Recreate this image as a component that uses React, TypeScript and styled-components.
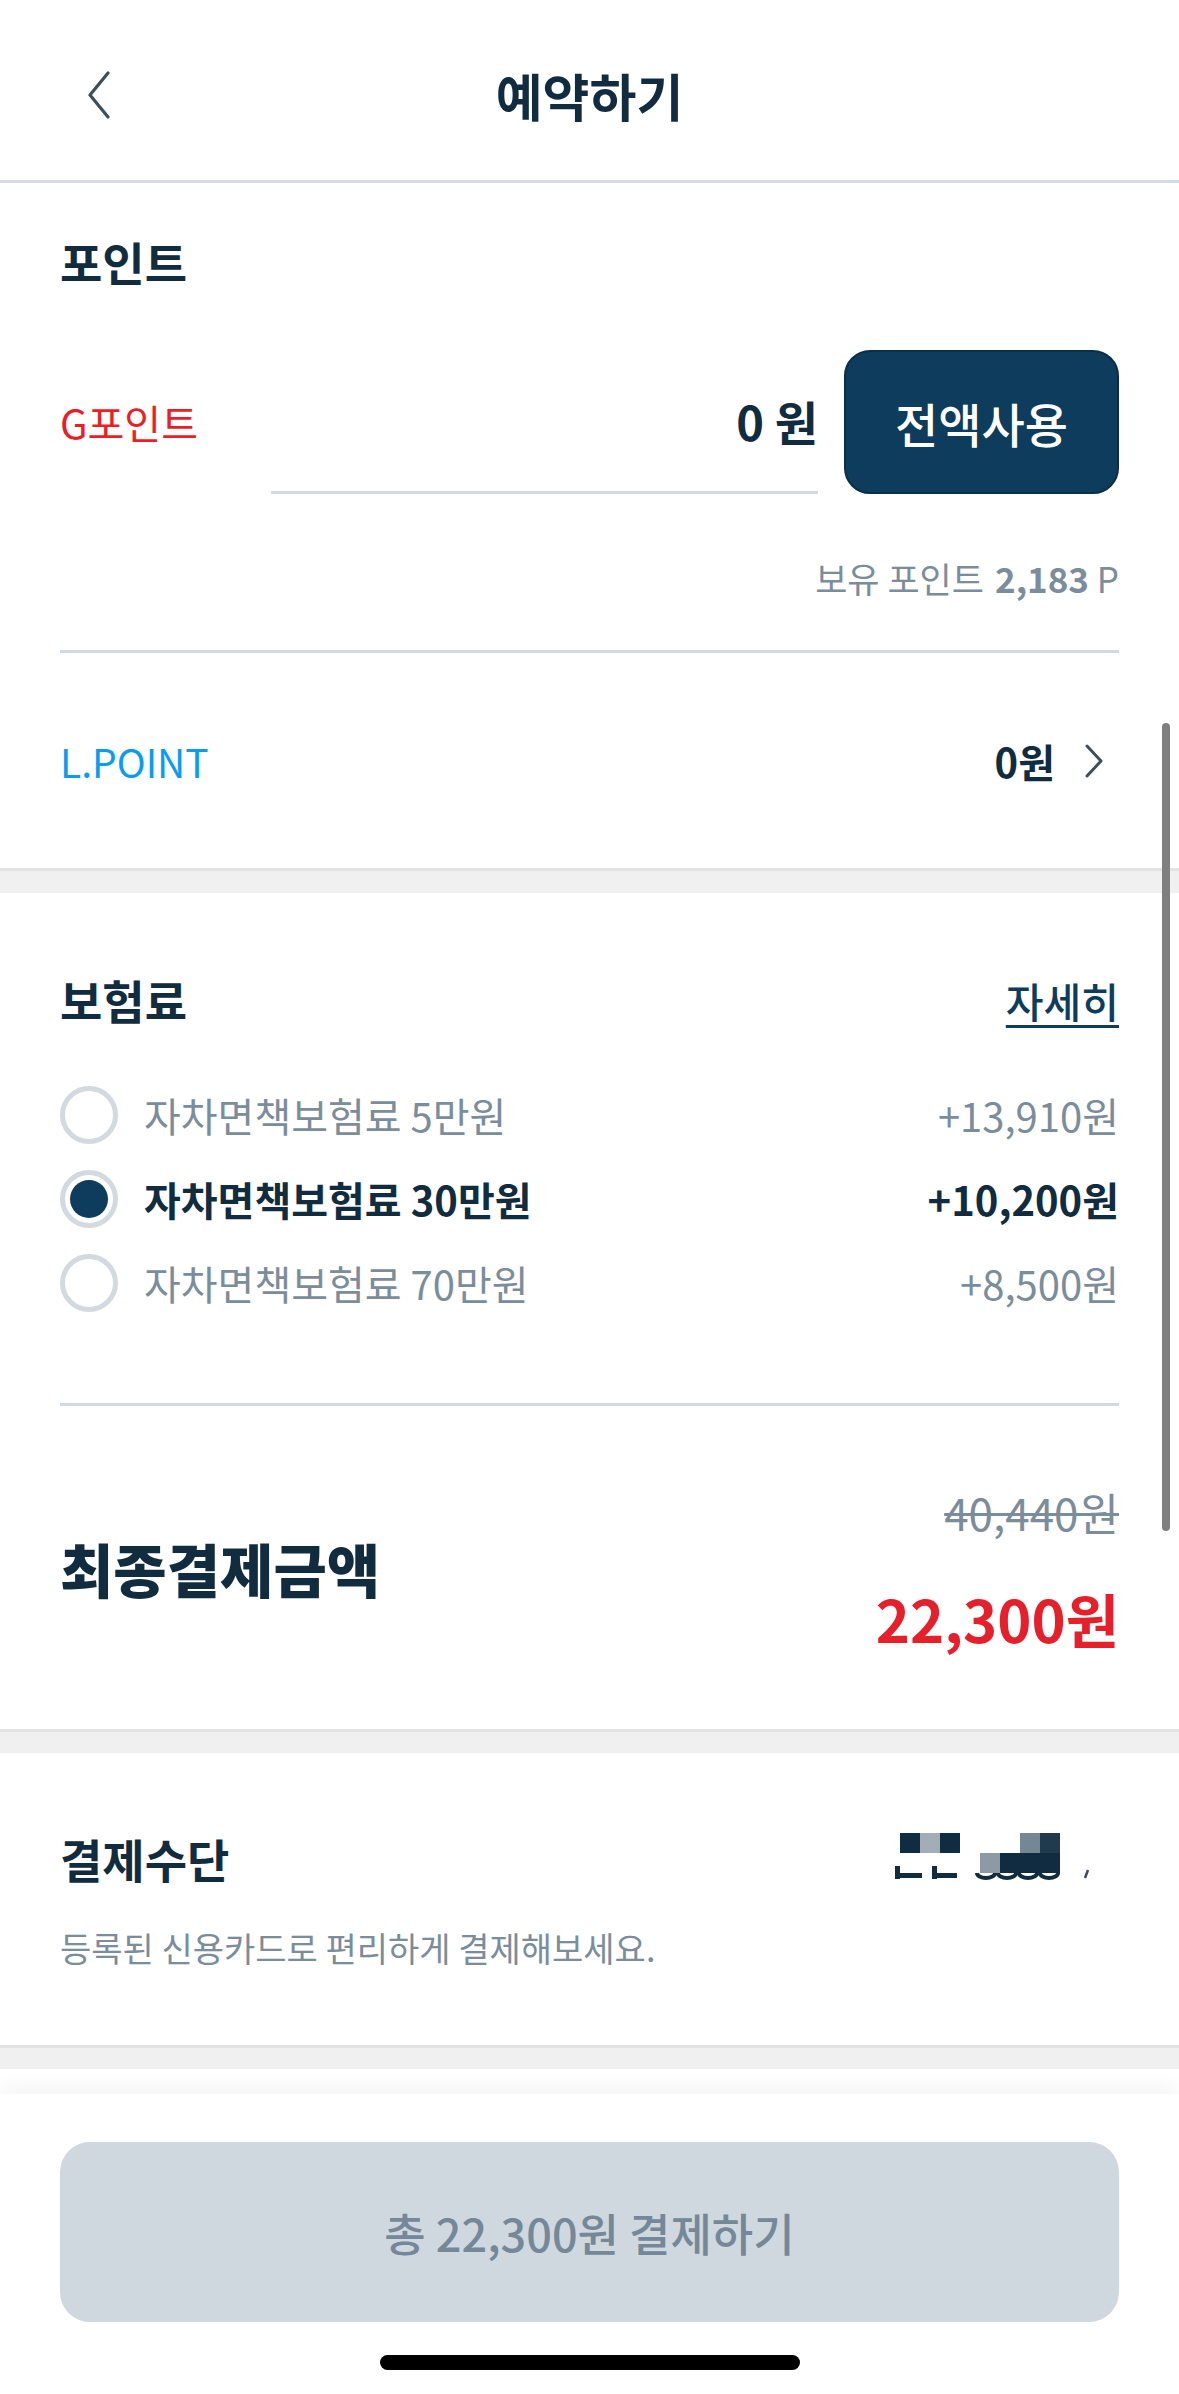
import React from "react";
import styled, { createGlobalStyle } from "styled-components";

const Global = createGlobalStyle`
  html, body { margin: 0; padding: 0; background: #ffffff; }
  body {
    font-family: "Noto Sans CJK KR", "Noto Sans", sans-serif;
    color: #122c3f;
    -webkit-font-smoothing: antialiased;
  }
  * { box-sizing: border-box; }
`;

const Page = styled.div`
  width: 1179px;
  height: 2394px;
  background: #ffffff;
  display: flex;
  flex-direction: column;
  overflow: hidden;
`;

const Header = styled.header`
  height: 183px;
  flex: none;
  border-bottom: 3px solid #d5dce1;
  padding: 50px 60px 0;
  display: grid;
  grid-template-columns: 1fr auto 1fr;
  align-items: start;
`;

const BackButton = styled.div`
  height: 90px;
  display: flex;
  align-items: center;
  padding-left: 26px;
`;

const HeaderTitle = styled.h1`
  margin: 0;
  height: 90px;
  line-height: 90px;
  font-size: 51px;
  font-weight: 700;
  color: #122c3f;
`;

const Section = styled.section<{ $pt: number; $pb: number }>`
  background: #ffffff;
  flex: none;
  padding: ${(p) => p.$pt}px 60px ${(p) => p.$pb}px;
`;

const Separator = styled.div<{ $h: number }>`
  flex: none;
  height: ${(p) => p.$h}px;
  background: #f0f0f0;
  border-top: 3px solid #e3e3e3;
`;

const Filler = styled.div`
  flex: 1;
  background: #ffffff;
`;

const TitleRow = styled.div<{ $h: number }>`
  height: ${(p) => p.$h}px;
  display: flex;
  align-items: center;
  justify-content: space-between;
`;

const SectionTitle = styled.h2`
  margin: 0;
  font-size: 46px;
  font-weight: 700;
  color: #122c3f;
  line-height: 1.2;
`;

const PointRow = styled.div`
  margin-top: 48px;
  height: 144px;
  display: flex;
  align-items: stretch;
`;

const PointLabel = styled.div`
  width: 211px;
  display: flex;
  align-items: center;
  font-size: 40px;
  color: #ee1c25;
`;

const AmountInput = styled.div`
  flex: 1;
  border-bottom: 3px solid #d2d9df;
  display: flex;
  align-items: center;
  justify-content: flex-end;
  font-size: 47px;
  font-weight: 700;
  color: #122c3f;
`;

const UseAllButton = styled.button`
  margin-left: 26px;
  width: 275px;
  border-radius: 26px;
  background: #0d3c5c;
  border: 2px solid #0a2f48;
  color: #ffffff;
  font-family: inherit;
  font-size: 47px;
  font-weight: 500;
  padding: 0;
`;

const BalanceRow = styled.div`
  margin-top: 50px;
  height: 66px;
  display: flex;
  align-items: center;
  justify-content: flex-end;
  font-size: 35px;
  color: #7b8d9b;
  gap: 11px;
`;

const Bold = styled.b`
  font-weight: 700;
`;

const Divider = styled.div<{ $mt: number }>`
  margin-top: ${(p) => p.$mt}px;
  height: 3px;
  background: #d2d9df;
`;

const LinkRow = styled.div`
  height: 215px;
  display: flex;
  align-items: center;
  justify-content: space-between;
`;

const LPointLabel = styled.div`
  font-size: 39px;
  color: #0a9bf2;
`;

const LinkValue = styled.div`
  display: flex;
  align-items: center;
  gap: 29px;
  padding-right: 15px;
  font-size: 40px;
  font-weight: 700;
  color: #122c3f;
`;

const DetailLink = styled.a`
  font-size: 41px;
  font-weight: 500;
  color: #0d3c5c;
  text-decoration: underline;
  text-decoration-thickness: 3px;
  text-underline-offset: 7px;
`;

const RadioList = styled.div`
  margin-top: 33px;
  display: flex;
  flex-direction: column;
`;

const RadioRow = styled.div`
  height: 84px;
  display: flex;
  align-items: center;
`;

const RadioCircle = styled.span<{ $checked: boolean }>`
  width: 58px;
  height: 58px;
  flex: none;
  border-radius: 50%;
  border: 5px solid #d2d9df;
  background: #ffffff;
  margin-right: 26px;
  display: flex;
  align-items: center;
  justify-content: center;
  &::after {
    content: "";
    display: ${(p) => (p.$checked ? "block" : "none")};
    width: 38px;
    height: 38px;
    border-radius: 50%;
    background: #0d3c5c;
  }
`;

const OptionName = styled.span<{ $checked: boolean }>`
  font-size: 40px;
  font-weight: ${(p) => (p.$checked ? 700 : 400)};
  color: ${(p) => (p.$checked ? "#122c3f" : "#7b8d9b")};
`;

const OptionPrice = styled(OptionName)`
  margin-left: auto;
`;

const FinalRow = styled.div`
  padding: 76px 0;
  display: flex;
  align-items: center;
  justify-content: space-between;
`;

const FinalLabel = styled.div`
  font-size: 58px;
  font-weight: 800;
  color: #122c3f;
`;

const PriceColumn = styled.div`
  display: flex;
  flex-direction: column;
  align-items: flex-end;
  gap: 41px;
`;

const OriginalPrice = styled.div`
  height: 60px;
  line-height: 60px;
  font-size: 44px;
  color: #7b8d9b;
  text-decoration: line-through;
  text-decoration-thickness: 3px;
`;

const FinalPrice = styled.div`
  height: 70px;
  line-height: 70px;
  font-size: 58px;
  font-weight: 700;
  color: #e5202a;
`;

const Subtitle = styled.p`
  margin: 39px 0 0;
  height: 40px;
  line-height: 40px;
  font-size: 34px;
  color: #7b8d9b;
`;

const Redaction = styled.svg`
  margin-right: 29px;
  flex: none;
`;

const BottomBar = styled.div`
  position: fixed;
  left: 0;
  bottom: 0;
  width: 1179px;
  height: 300px;
  background: #ffffff;
  box-shadow: 0 -6px 22px rgba(0, 0, 0, 0.05);
  padding: 48px 60px 0;
  display: flex;
  flex-direction: column;
  align-items: center;
`;

const PayButton = styled.button`
  width: 100%;
  height: 180px;
  border: none;
  border-radius: 30px;
  background: #d0d8df;
  color: #74889a;
  font-family: inherit;
  font-size: 45px;
  font-weight: 500;
`;

const HomeIndicator = styled.div`
  margin-top: 33px;
  width: 420px;
  height: 15px;
  border-radius: 8px;
  background: #000000;
`;

const ScrollIndicator = styled.div`
  position: fixed;
  right: 9px;
  top: 723px;
  width: 8px;
  height: 808px;
  border-radius: 4px;
  background: #7f7f7f;
`;

const options = [
  { name: "자차면책보험료 5만원", price: "+13,910원", checked: false },
  { name: "자차면책보험료 30만원", price: "+10,200원", checked: true },
  { name: "자차면책보험료 70만원", price: "+8,500원", checked: false },
];

export default function App() {
  return (
    <>
      <Global />
      <Page>
        <Header>
          <BackButton>
            <svg width="26" height="48" viewBox="0 0 26 48" fill="none">
              <path d="M22 2 L4 24 L22 46" stroke="#3d4f5c" strokeWidth="3.2" strokeLinecap="round" strokeLinejoin="round" />
            </svg>
          </BackButton>
          <HeaderTitle>예약하기</HeaderTitle>
          <div />
        </Header>

        <Section $pt={39} $pb={0}>
          <TitleRow $h={80}>
            <SectionTitle>포인트</SectionTitle>
          </TitleRow>
          <PointRow>
            <PointLabel>G포인트</PointLabel>
            <AmountInput>0 원</AmountInput>
            <UseAllButton>전액사용</UseAllButton>
          </PointRow>
          <BalanceRow>
            <span>보유 포인트</span>
            <span>
              <Bold>2,183</Bold> P
            </span>
          </BalanceRow>
          <Divider $mt={40} />
          <LinkRow>
            <LPointLabel>L.POINT</LPointLabel>
            <LinkValue>
              <span>0원</span>
              <svg width="20" height="34" viewBox="0 0 20 34" fill="none">
                <path d="M3 2 L17 17 L3 32" stroke="#3d4f5c" strokeWidth="3" strokeLinecap="round" strokeLinejoin="round" />
              </svg>
            </LinkValue>
          </LinkRow>
        </Section>

        <Separator $h={25} />

        <Section $pt={67} $pb={0}>
          <TitleRow $h={80}>
            <SectionTitle>보험료</SectionTitle>
            <DetailLink>자세히</DetailLink>
          </TitleRow>
          <RadioList>
            {options.map((o) => (
              <RadioRow key={o.name}>
                <RadioCircle $checked={o.checked} />
                <OptionName $checked={o.checked}>{o.name}</OptionName>
                <OptionPrice $checked={o.checked}>{o.price}</OptionPrice>
              </RadioRow>
            ))}
          </RadioList>
          <Divider $mt={78} />
          <FinalRow>
            <FinalLabel>최종결제금액</FinalLabel>
            <PriceColumn>
              <OriginalPrice>40,440원</OriginalPrice>
              <FinalPrice>22,300원</FinalPrice>
            </PriceColumn>
          </FinalRow>
        </Section>

        <Separator $h={24} />

        <Section $pt={76} $pb={77}>
          <TitleRow $h={60}>
            <SectionTitle>결제수단</SectionTitle>
            <Redaction width="200" height="60" viewBox="0 0 200 60">
              <rect x="10" y="4" width="20" height="20" fill="#0f2d40" />
              <rect x="30" y="4" width="20" height="20" fill="#a3adb5" />
              <rect x="50" y="4" width="20" height="20" fill="#0f2d40" />
              <rect x="130" y="4" width="20" height="20" fill="#758694" />
              <rect x="150" y="4" width="20" height="20" fill="#203a4e" />
              <rect x="90" y="24" width="20" height="20" fill="#8d9aa3" />
              <rect x="110" y="24" width="60" height="20" fill="#112c40" />
              <rect x="5" y="37" width="5" height="13" fill="#122c3f" />
              <rect x="5" y="44" width="27" height="5" fill="#122c3f" />
              <rect x="42" y="37" width="5" height="13" fill="#122c3f" />
              <rect x="42" y="44" width="25" height="5" fill="#122c3f" />
              <path d="M87 44 A9 5 0 0 0 105 44 M108 44 A9 5 0 0 0 126 44 M129 44 A9 5 0 0 0 147 44 M150 44 A9 5 0 0 0 168 44" stroke="#122c3f" strokeWidth="4" fill="none" />
              <path d="M198 41 L195 49" stroke="#3d4f5c" strokeWidth="2.5" />
            </Redaction>
          </TitleRow>
          <Subtitle>등록된 신용카드로 편리하게 결제해보세요.</Subtitle>
        </Section>

        <Separator $h={24} />
        <Filler />
      </Page>
      <ScrollIndicator />
      <BottomBar>
        <PayButton>총 22,300원 결제하기</PayButton>
        <HomeIndicator />
      </BottomBar>
    </>
  );
}
